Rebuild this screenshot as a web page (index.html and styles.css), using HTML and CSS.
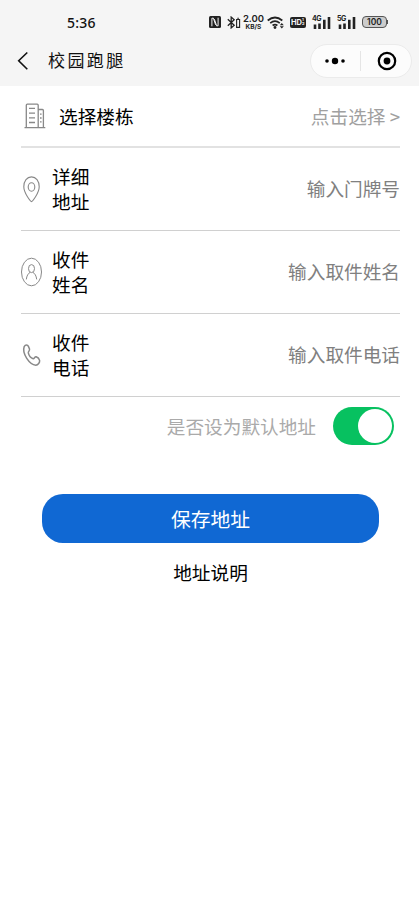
FILE: index.html
```html
<!DOCTYPE html>
<html lang="zh-CN">
<head>
    <meta charset="UTF-8">
    <meta name="viewport" content="width=device-width, initial-scale=1.0">
    <title>校园跑腿</title>
    <link rel="stylesheet" href="styles.css">
</head>
<body>
    <header class="header">
        <div class="status-bar">
            <span class="time">5:36</span>
            <div class="status-icons">
                <svg class="nfc" width="12" height="12" viewBox="0 0 12 12">
                    <rect width="12" height="12" rx="1.5" fill="#222"/>
                    <path d="M2.9 10.3V2.2h1.5l2.2 6.6M9.1 1.7v8.1H7.6L5.4 3.2" fill="none" stroke="#f5f5f5" stroke-width="1"/>
                </svg>
                <svg class="bluetooth" width="14" height="13" viewBox="0 0 14 13">
                    <path d="M.8 3.2l6.4 6.1-3 2.6V1.1l3 2.6L.8 9.8" fill="none" stroke="#222" stroke-width="1.3"/>
                    <path d="M9.6 3.5h3v7.9h-3zM10.3 2.2h1.6" fill="none" stroke="#222" stroke-width="1.1"/>
                </svg>
                <div class="speed"><b>2.00</b><small>KB/S</small></div>
                <svg class="wifi" width="18" height="13" viewBox="0 0 18 13">
                    <path d="M.7 4.5q7.3-6 14.6 0M3.2 7.1q4.8-3.8 9.6 0M5.6 9.5q2.4-1.9 4.8 0" fill="none" stroke="#222" stroke-width="1.7"/>
                    <circle cx="8" cy="11.5" r="1.4" fill="#222"/>
                    <path d="M12.8 9.3l2-2.3 2 2.3zM12.8 10.3h4l-2 2.2z" fill="#222"/>
                </svg>
                <div class="hd">HD<span>1<br>2</span></div>
                <div class="signal">
                    <span>4G</span>
                    <svg width="19" height="13" viewBox="0 0 19 13">
                        <path d="M3 8.5V13M7.5 7.5V13M12.3 3.8V13M17 1V13" stroke="#222" stroke-width="2.6"/>
                    </svg>
                </div>
                <div class="signal">
                    <span>5G</span>
                    <svg width="19" height="13" viewBox="0 0 19 13">
                        <path d="M3 8.5V13M7.5 7.5V13M12.3 3.8V13M17 1V13" stroke="#222" stroke-width="2.6"/>
                    </svg>
                </div>
                <div class="battery">100</div>
            </div>
        </div>
        <nav class="nav-bar">
            <svg class="back" width="12" height="20" viewBox="0 0 12 20">
                <path d="M10.3 1.5L1.7 9.7l8.6 8.5" fill="none" stroke="#111" stroke-width="1.6"/>
            </svg>
            <h1 class="title">校园跑腿</h1>
            <div class="capsule">
                <svg width="22" height="8" viewBox="0 0 22 8">
                    <circle cx="2" cy="4" r="1.8"/>
                    <circle cx="10" cy="4" r="3.2"/>
                    <circle cx="18" cy="4" r="1.8"/>
                </svg>
                <i class="capsule-line"></i>
                <svg width="20" height="20" viewBox="0 0 20 20">
                    <circle cx="10" cy="10" r="8.2" fill="none" stroke="#000" stroke-width="2.2"/>
                    <circle cx="10" cy="10" r="3.4"/>
                </svg>
            </div>
        </nav>
    </header>

    <main class="form">
        <div class="row row-select">
            <svg class="icon-building" width="22" height="26" viewBox="0 0 22 26">
                <g fill="none" stroke="#888" stroke-width="1.3">
                    <path d="M.5 24.6h20.8M2.3 24V2.2q0-1 1-1h9.9q1 0 1 1V24M14.2 6.5h4.2q1 0 1 1V24"/>
                    <path d="M5 5.3h6M5 10.1h6M5 14.8h6M5 19.5h6"/>
                    <path d="M16 11.2h1.6M16 15h1.6M16 18.8h1.6"/>
                </g>
            </svg>
            <span class="label">选择楼栋</span>
            <span class="value value-light">点击选择 &gt;</span>
        </div>
        <div class="row">
            <svg class="icon" width="21" height="30" viewBox="0 0 21 30">
                <g fill="none" stroke="#888" stroke-width="1.1">
                    <path d="M10.5 27.6C9.6 27.6 2.8 19 2.8 12.8C2.8 7 6 2.9 10.5 2.9S18.2 7 18.2 12.8C18.2 19 11.4 27.6 10.5 27.6z"/>
                    <ellipse cx="10.5" cy="13" rx="3.3" ry="4.2"/>
                </g>
            </svg>
            <span class="label">详细<br>地址</span>
            <span class="value">输入门牌号</span>
        </div>
        <div class="row">
            <svg class="icon" width="21" height="30" viewBox="0 0 21 30">
                <g fill="none" stroke="#888" stroke-width="1">
                    <ellipse cx="10.5" cy="15" rx="10" ry="13.8"/>
                    <ellipse cx="10.5" cy="11.6" rx="3" ry="4"/>
                    <path d="M5.3 22.4C5.7 18.8 7.3 16.2 9.2 15.3M11.8 15.3C13.7 16.2 15.3 18.8 15.7 22.4"/>
                </g>
            </svg>
            <span class="label">收件<br>姓名</span>
            <span class="value">输入取件姓名</span>
        </div>
        <div class="row">
            <svg class="icon" width="21" height="30" viewBox="0 0 21 30">
                <path d="M3.2 6.6C4.4 4.4 6.6 4.5 7.4 6.4L8.5 9C9 10.8 7.1 11.3 7.3 12.9C7.9 15.4 10.1 18.1 12.2 18.7C13.4 18.9 13.7 16.4 15.2 16.8C16.6 17.3 18.2 18.9 18.6 20.4C19 22.6 17 25.1 14.8 25.2C8.6 24.6 .7 13.6 3.2 6.6z" fill="none" stroke="#888" stroke-width="1.5"/>
            </svg>
            <span class="label">收件<br>电话</span>
            <span class="value">输入取件电话</span>
        </div>
        <div class="default-row">
            <span>是否设为默认地址</span>
            <div class="switch"></div>
        </div>
        <button class="save">保存地址</button>
        <p class="explain">地址说明</p>
    </main>
</body>
</html>
```
FILE: styles.css
```css
* {
    margin: 0;
    padding: 0;
    box-sizing: border-box;
}

body {
    background-color: #fff;
    font-family: "Noto Sans CJK SC", sans-serif;
    font-size: 18.67px;
    color: #000;
}

.header {
    height: 86px;
    background-color: #f5f5f5;
}

.status-bar {
    height: 43px;
    padding: 1px 32px 0 67px;
    display: flex;
    align-items: center;
    justify-content: space-between;
    font-family: Inter, sans-serif;
    color: #222;
}

.time {
    font-family: "Noto Sans", sans-serif;
    font-size: 14px;
    font-weight: 500;
    letter-spacing: 0.2px;
    color: #111;
}

.status-icons {
    display: flex;
    align-items: center;
}

.bluetooth {
    margin-left: 6px;
}

.speed {
    width: 21px;
    margin-left: 2px;
    display: flex;
    flex-direction: column;
    align-items: center;
    line-height: 9px;
}

.speed b {
    font-size: 9.5px;
    font-weight: 600;
    line-height: 9px;
}

.speed small {
    font-size: 6.5px;
    font-weight: bold;
    line-height: 8px;
}

.wifi {
    margin-left: 3px;
}

.hd {
    width: 16px;
    height: 11px;
    margin-left: 5px;
    padding-left: 1px;
    border-radius: 2px;
    background-color: #222;
    color: #f5f5f5;
    display: flex;
    align-items: center;
    font-size: 7.5px;
    font-weight: bold;
}

.hd span {
    font-size: 4px;
    line-height: 4px;
}

.signal {
    width: 19px;
    height: 13px;
    margin-left: 6px;
    position: relative;
}

.signal svg {
    display: block;
}

.signal span {
    position: absolute;
    left: 0;
    top: -1px;
    background-color: #f5f5f5;
    font-size: 7px;
    font-weight: bold;
    line-height: 7px;
    letter-spacing: -0.5px;
}

.battery {
    width: 25px;
    height: 12px;
    margin-left: 6px;
    border: 1px solid #555;
    border-radius: 4px;
    background-color: #ccc;
    font-size: 8.5px;
    font-weight: 600;
    line-height: 10px;
    text-align: center;
    position: relative;
}

.battery::after {
    content: "";
    position: absolute;
    right: -2px;
    top: 3px;
    width: 1px;
    height: 4px;
    background-color: #555;
}

.nav-bar {
    height: 35px;
    padding: 0 7px 0 17px;
    display: flex;
    align-items: center;
}

.title {
    margin-left: 19px;
    font-size: 17px;
    font-weight: 400;
    letter-spacing: 2.4px;
    line-height: 32px;
    padding-bottom: 2px;
    color: #111;
}

.capsule {
    width: 102px;
    height: 34px;
    margin-left: auto;
    padding: 0 14px;
    border: 1px solid #ebebeb;
    border-radius: 17px;
    background-color: #fcfcfc;
    display: flex;
    align-items: center;
    justify-content: space-between;
}

.capsule-line {
    width: 1px;
    height: 20px;
    margin-left: -3px;
    background-color: #e5e5e5;
}

.form {
    padding: 0 19px 0 21px;
}

.row {
    height: 83px;
    border-bottom: 1px solid #d0d0d0;
    display: flex;
    align-items: center;
    line-height: 24.7px;
}

.row-select {
    height: 62px;
    border-bottom: 2px solid #e2e2e2;
}

.icon-building {
    margin-left: 3px;
}

.label {
    margin-left: 10px;
}

.row-select .label {
    margin-left: 13px;
}

.value {
    margin-left: auto;
    padding-bottom: 2px;
    color: #808080;
}

.value-light {
    padding-bottom: 0;
    color: #a0a0a0;
}

.default-row {
    height: 59px;
    padding: 0 6px 1px 0;
    display: flex;
    align-items: center;
    justify-content: flex-end;
    color: #aaa;
}

.default-row span {
    padding-bottom: 1px;
}

.switch {
    width: 61px;
    height: 38px;
    margin-left: 17px;
    padding: 2px;
    border-radius: 19px;
    background-color: #07c160;
    display: flex;
    justify-content: flex-end;
}

.switch::after {
    content: "";
    width: 34px;
    height: 34px;
    border-radius: 50%;
    background-color: #fff;
}

.save {
    display: block;
    width: 337px;
    height: 49px;
    margin: 38px auto 0 21px;
    border: none;
    border-radius: 21px;
    background-color: #1068d3;
    color: #fff;
    font-family: inherit;
    font-size: 19.8px;
}

.explain {
    margin-top: 15px;
    text-align: center;
    line-height: 27px;
}
```
